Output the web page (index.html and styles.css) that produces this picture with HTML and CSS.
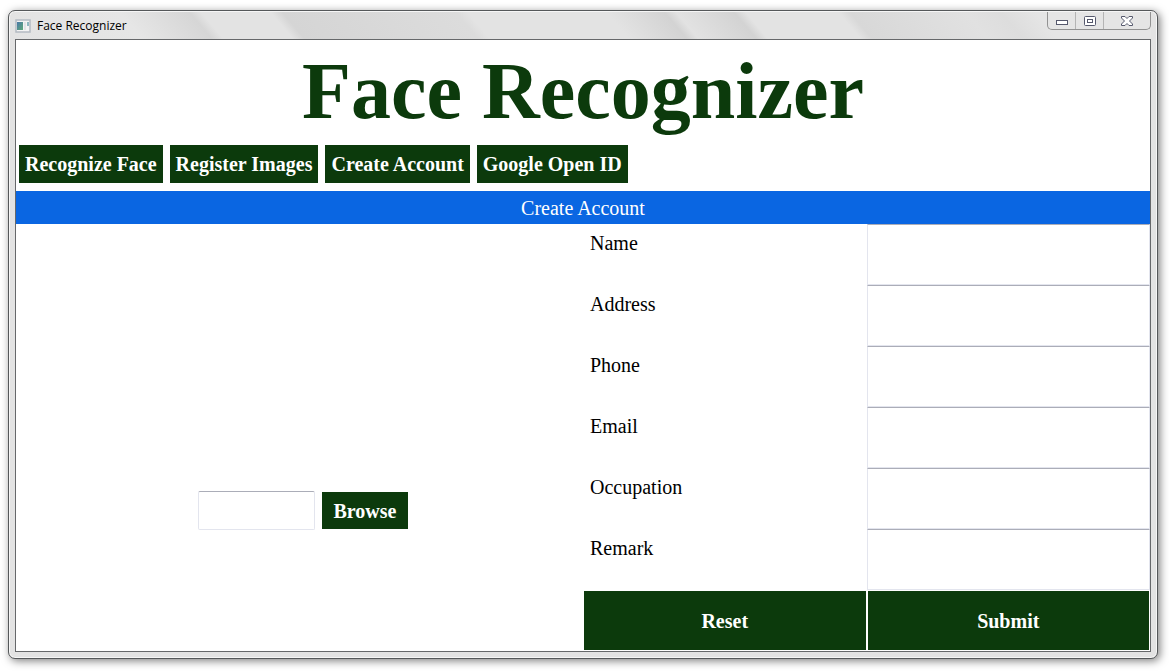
FILE: index.html
```html
<!DOCTYPE html>
<html lang="en">
<head>
<meta charset="utf-8">
<title>Face Recognizer</title>
<link rel="stylesheet" href="styles.css">
</head>
<body>
<div class="window">
  <header class="titlebar">
    <svg class="app-icon" width="16" height="14" viewBox="0 0 16 14" aria-hidden="true">
      <defs>
        <linearGradient id="pane" x1="0" y1="0" x2="1" y2="1">
          <stop offset="0" stop-color="#4a78a8"/>
          <stop offset="1" stop-color="#5faa78"/>
        </linearGradient>
      </defs>
      <rect x="1" y="1" width="14" height="12" fill="#f4f4f4" stroke="#b4bac2" stroke-width="1.500"/>
      <rect x="2" y="3" width="6" height="8" fill="url(#pane)"/>
      <rect x="9" y="3" width="2" height="8" fill="#e2e4e6"/>
      <rect x="12" y="3" width="2" height="4" fill="#8fb8c0"/>
    </svg>
    <span class="window-title">Face Recognizer</span>
    <div class="window-controls">
      <button class="control" type="button" aria-label="Minimize">
        <svg width="12" height="5" viewBox="0 0 12 5"><rect x="0.5" y="0.5" width="11" height="4" fill="#fff" stroke="#55586c"/></svg>
      </button>
      <button class="control" type="button" aria-label="Maximize">
        <svg width="12" height="10" viewBox="0 0 12 10"><rect x="0.5" y="0.5" width="11" height="9" rx="1" fill="#fff" stroke="#55586c"/><rect x="3.5" y="3.5" width="5" height="3" fill="#fff" stroke="#55586c"/></svg>
      </button>
      <button class="control control-close" type="button" aria-label="Close">
        <svg width="12" height="10" viewBox="0 0 12 10"><path d="M.5 .5H4L6 2.500 8 .5H11.500V2L8.500 5 11.500 8V9.500H8L6 7.500 4 9.500H.5V8L3.500 5 .5 2Z" fill="#fff" stroke="#55586c" stroke-linejoin="round"/></svg>
      </button>
    </div>
  </header>
  <main class="client">
    <h1 class="heading">Face Recognizer</h1>
    <nav class="nav">
      <button class="button" type="button">Recognize Face</button>
      <button class="button" type="button">Register Images</button>
      <button class="button" type="button">Create Account</button>
      <button class="button" type="button">Google Open ID</button>
    </nav>
    <h2 class="banner">Create Account</h2>
    <form class="account">
      <div class="photo">
        <div class="picker">
          <input class="path" type="text" aria-label="Image file">
          <button class="button browse" type="button">Browse</button>
        </div>
      </div>
      <div class="fields">
        <label class="label" for="name">Name</label><input class="field" id="name" type="text">
        <label class="label" for="address">Address</label><input class="field" id="address" type="text">
        <label class="label" for="phone">Phone</label><input class="field" id="phone" type="text">
        <label class="label" for="email">Email</label><input class="field" id="email" type="text">
        <label class="label" for="occupation">Occupation</label><input class="field" id="occupation" type="text">
        <label class="label" for="remark">Remark</label><input class="field" id="remark" type="text">
        <button class="button action" type="reset">Reset</button>
        <button class="button action" type="submit">Submit</button>
      </div>
    </form>
  </main>
</div>
</body>
</html>
```
FILE: styles.css
```css
* {
  box-sizing: border-box;
}

body {
  margin: 0;
  min-height: 100vh;
  padding: 10px 11px 12px 8px;
  display: flex;
  background: #fff;
  font-family: "Liberation Serif", "Times New Roman", serif;
  font-size: 20px;
  line-height: 24px;
  color: #000;
}

.window {
  flex: 1;
  display: flex;
  flex-direction: column;
  padding: 0 6px 6px;
  border: 1px solid #55585a;
  border-radius: 7px;
  background: #e3e3e3;
  box-shadow: inset 0 0 0 1px #f6f6f6, 2px 2px 8px rgba(0, 0, 0, 0.5);
}

.titlebar {
  height: 28px;
  display: flex;
  align-items: center;
  gap: 6px;
  border-top: 1px solid #f6f6f6;
  background: linear-gradient(50deg, #e3e3e3 0, #e6e6e6 11%, #d6d6d6 17%, #e3e3e3 18%, #e3e3e3 24%, #d5d5d5 25%, #dcdcdc 40%, #e3e3e3 41%, #e3e3e3 53%, #d3d3d3 58%, #e2e2e2 59%, #d3d3d3 64%, #e3e3e3 65%, #e3e3e3 73%, #d8d8d8 74%, #e1e1e1 84%, #dddddd 87%, #e5e5e5 90%, #e5e5e5 100%);
}

.window-title {
  flex: 1;
  font-family: "Open Sans", "Noto Sans", sans-serif;
  font-size: 12px;
  line-height: 16px;
}

.window-controls {
  align-self: flex-start;
  height: 18px;
  display: flex;
  border: 1px solid #929292;
  border-top: 0;
  border-radius: 0 0 5px 5px;
}

.control {
  width: 28px;
  padding: 0;
  border: 0;
  border-right: 1px solid #b4b4b4;
  background: none;
  display: flex;
  align-items: center;
  justify-content: center;
}

.control:first-child {
  align-items: flex-end;
  padding-bottom: 4px;
}

.control-close {
  width: 46px;
  border-right: 0;
}

.client {
  flex: 1;
  display: flex;
  flex-direction: column;
  border: 1px solid #66686a;
  background: #fff;
}

.heading {
  margin: 0;
  padding: 5px 0 7px;
  font-size: 80px;
  line-height: 92px;
  text-align: center;
  color: #0c3a0c;
}

.nav {
  display: flex;
  gap: 7px;
  padding: 1px 3px 8px;
}

.button {
  height: 38px;
  padding: 0 6px;
  border: 0;
  background: #0c3a0c;
  color: #fff;
  font: bold 20px/24px "Liberation Serif", "Times New Roman", serif;
}

.banner {
  margin: 0;
  padding: 5px 0 4px;
  background: #0a66e2;
  color: #fff;
  font-size: 20px;
  font-weight: normal;
  text-align: center;
}

.account {
  flex: 1;
  display: grid;
  grid-template-columns: 1fr 1fr;
}

.photo {
  display: flex;
  align-items: flex-end;
  justify-content: center;
  padding: 0 0 121px 7px;
}

.picker {
  display: flex;
  align-items: center;
  gap: 7px;
}

.path,
.field {
  min-width: 0;
  padding: 0 6px;
  border: 1px solid #e3e5ee;
  border-top-color: #abadb8;
  background: #fff;
  font: inherit;
}

.path {
  width: 117px;
  height: 39px;
  border-radius: 2px;
}

.browse {
  width: 86px;
  height: 37px;
}

.fields {
  display: grid;
  grid-template-columns: 1fr 1fr;
  grid-template-rows: repeat(7, 1fr);
}

.label {
  padding: 7px;
}

.action {
  height: auto;
  margin: 1px 1px 1px;
}
```
